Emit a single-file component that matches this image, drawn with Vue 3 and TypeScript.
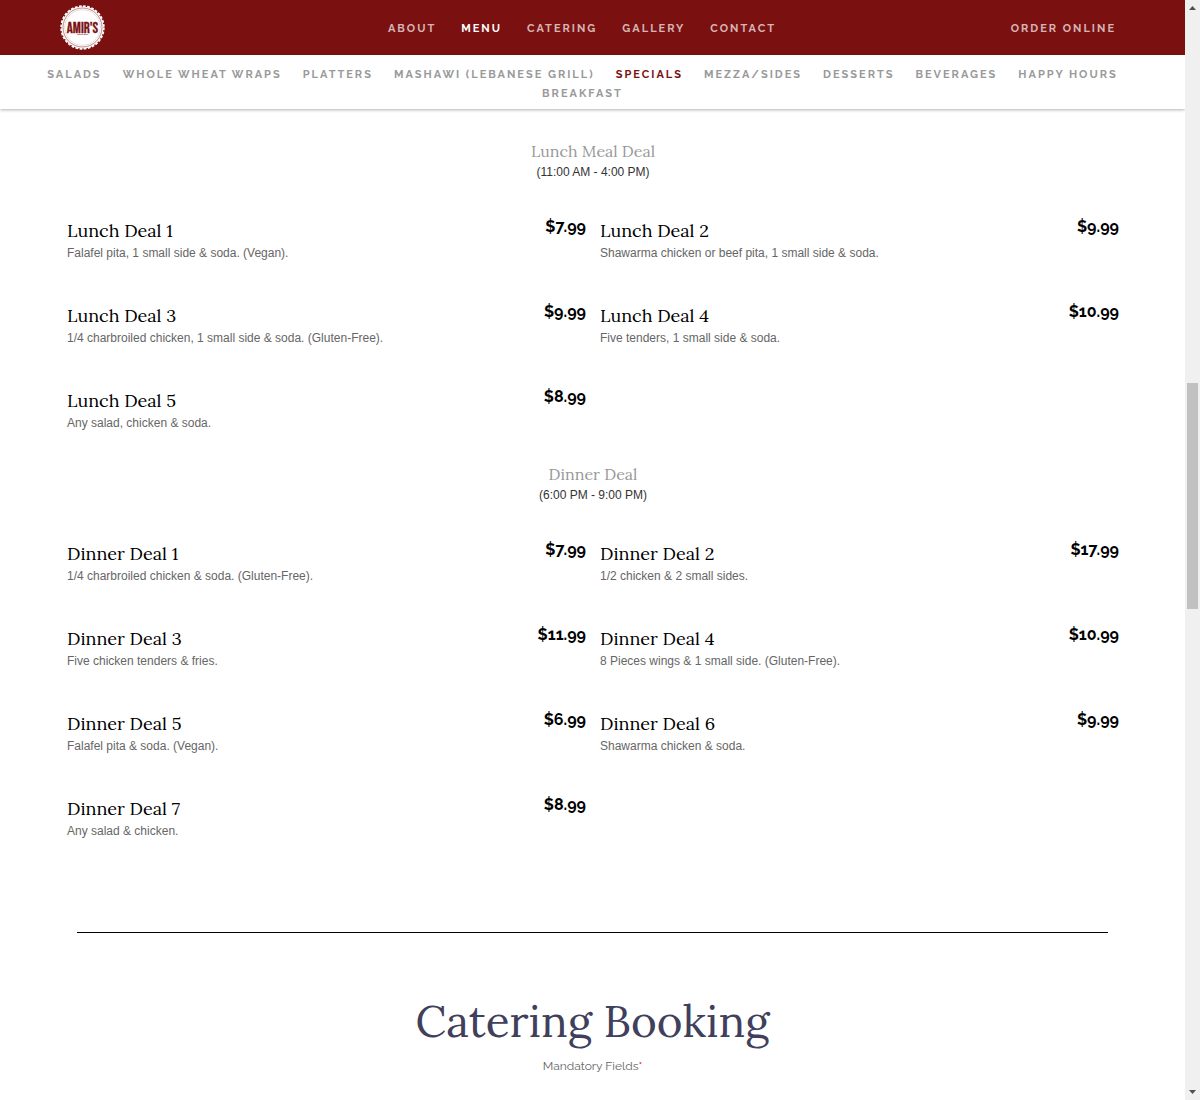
<script setup lang="ts">
interface Deal {
  name: string
  description: string
  price: string
}

interface DealGroup {
  title: string
  hours: string
  deals: Deal[]
}

const mainLinks: string[] = ['About', 'Menu', 'Catering', 'Gallery', 'Contact']
const menuLinks: string[] = [
  'Salads',
  'Whole Wheat Wraps',
  'Platters',
  'Mashawi (Lebanese Grill)',
  'Specials',
  'Mezza/Sides',
  'Desserts',
  'Beverages',
  'Happy Hours',
  'Breakfast',
]

const groups: DealGroup[] = [
  {
    title: 'Lunch Meal Deal',
    hours: '(11:00 AM - 4:00 PM)',
    deals: [
      { name: 'Lunch Deal 1', description: 'Falafel pita, 1 small side & soda. (Vegan).', price: '$7.99' },
      { name: 'Lunch Deal 2', description: 'Shawarma chicken or beef pita, 1 small side & soda.', price: '$9.99' },
      { name: 'Lunch Deal 3', description: '1/4 charbroiled chicken, 1 small side & soda. (Gluten-Free).', price: '$9.99' },
      { name: 'Lunch Deal 4', description: 'Five tenders, 1 small side & soda.', price: '$10.99' },
      { name: 'Lunch Deal 5', description: 'Any salad, chicken & soda.', price: '$8.99' },
    ],
  },
  {
    title: 'Dinner Deal',
    hours: '(6:00 PM - 9:00 PM)',
    deals: [
      { name: 'Dinner Deal 1', description: '1/4 charbroiled chicken & soda. (Gluten-Free).', price: '$7.99' },
      { name: 'Dinner Deal 2', description: '1/2 chicken & 2 small sides.', price: '$17.99' },
      { name: 'Dinner Deal 3', description: 'Five chicken tenders & fries.', price: '$11.99' },
      { name: 'Dinner Deal 4', description: '8 Pieces wings & 1 small side. (Gluten-Free).', price: '$10.99' },
      { name: 'Dinner Deal 5', description: 'Falafel pita & soda. (Vegan).', price: '$6.99' },
      { name: 'Dinner Deal 6', description: 'Shawarma chicken & soda.', price: '$9.99' },
      { name: 'Dinner Deal 7', description: 'Any salad & chicken.', price: '$8.99' },
    ],
  },
]
</script>

<template>
  <div class="window">
    <div class="page">
      <header class="site-header">
        <div class="top-bar">
          <a href="#home" class="brand" aria-label="Amir's home">
            <svg class="logo" viewBox="0 0 47 47" aria-hidden="true">
              <circle cx="23.5" cy="23.5" r="21" fill="#fff" />
              <circle cx="23.5" cy="23.5" r="21.3" fill="none" stroke="#fff" stroke-width="1.8" stroke-dasharray="2.7 1.48" />
              <circle cx="23.5" cy="23.5" r="19.5" fill="none" stroke="#7b1010" stroke-width="0.7" opacity="0.7" />
              <circle cx="23.5" cy="23.5" r="17.8" fill="none" stroke="#7b1010" stroke-width="0.5" opacity="0.3" />
              <text x="23.5" y="29" text-anchor="middle" class="logo-name">AMIR'S</text>
              <text x="23.5" y="31" text-anchor="middle" class="logo-sub">SINCE 2011</text>
            </svg>
          </a>
          <nav class="main-nav" aria-label="Main">
            <a v-for="link in mainLinks" :key="link" href="#" :class="{ active: link === 'Menu' }">{{ link }}</a>
          </nav>
          <a href="#order" class="order">Order Online</a>
        </div>
        <nav class="menu-nav" aria-label="Menu sections">
          <a v-for="link in menuLinks" :key="link" href="#" :class="{ active: link === 'Specials' }">{{ link }}</a>
        </nav>
      </header>

      <main>
        <section v-for="group in groups" :key="group.title" class="group">
          <h2>{{ group.title }}</h2>
          <p class="hours">{{ group.hours }}</p>
          <ul class="deals">
            <li v-for="deal in group.deals" :key="deal.name" class="deal">
              <div>
                <h3>{{ deal.name }}</h3>
                <p class="description">{{ deal.description }}</p>
              </div>
              <span class="price">{{ deal.price }}</span>
            </li>
          </ul>
        </section>

        <hr />

        <section class="booking">
          <h1>Catering Booking</h1>
          <p class="mandatory">Mandatory Fields<span class="star">*</span></p>
        </section>
      </main>
    </div>

    <div class="scrollbar" aria-hidden="true">
      <svg class="arrow" viewBox="0 0 15 17"><path d="M4 10h7L7.500 6z" fill="#505050" /></svg>
      <div class="track"><div class="thumb"></div></div>
      <svg class="arrow" viewBox="0 0 15 17"><path d="M4 7h7L7.500 11z" fill="#505050" /></svg>
    </div>
  </div>
</template>

<style>
body {
  margin: 0;
  background: #fff;
}
</style>

<style scoped>
.window {
  display: flex;
  align-items: flex-start;
  font-family: 'Liberation Sans', Arial, sans-serif;
  font-size: 12px;
}

.page {
  flex: 1;
  min-width: 0;
}

a {
  text-decoration: none;
}

h1,
h2,
h3,
p,
ul {
  margin: 0;
  padding: 0;
  font-weight: 400;
}

h1,
h2,
h3 {
  font-family: Lora, 'Liberation Serif', serif;
}

.site-header {
  box-shadow: 0 1px 3px rgba(0, 0, 0, 0.3);
}

.site-header a {
  font: 700 11px/19px Raleway, Lato, sans-serif;
  letter-spacing: 2px;
  text-transform: uppercase;
}

.top-bar {
  display: grid;
  grid-template-columns: 1fr auto 1fr;
  align-items: center;
  height: 55px;
  padding: 0 69px 0 59px;
  background: #7b1010;
}

.brand,
.logo {
  display: block;
  width: 47px;
  height: 47px;
}

.logo-name {
  font: 400 15px 'Bebas Neue', 'Oswald', 'Roboto Condensed', 'Liberation Sans', sans-serif;
  letter-spacing: 0;
  fill: #7b1010;
  stroke: #7b1010;
  stroke-width: 0.3px;
}

.logo-sub {
  font: 700 2px 'Liberation Sans', sans-serif;
  letter-spacing: 0;
  fill: #7b1010;
}

.main-nav {
  display: flex;
  gap: 25px;
  margin-right: 11px;
}

.main-nav a,
.order {
  padding-top: 1px;
  color: rgba(255, 255, 255, 0.7);
}

.main-nav a.active {
  color: #fff;
}

.order {
  justify-self: end;
}

.menu-nav {
  display: flex;
  flex-wrap: wrap;
  justify-content: center;
  column-gap: 21px;
  padding: 10px 40px 6px 20px;
}

.menu-nav a {
  color: #999;
}

.menu-nav a.active {
  color: #7b1010;
}

.group {
  padding: 0 66px 0 67px;
  text-align: center;
}

.group:first-child {
  padding-top: 32px;
}

h2 {
  font-size: 16px;
  line-height: 21px;
  color: #999;
}

.hours {
  line-height: 20px;
  color: #333;
}

.deals {
  display: grid;
  grid-template-columns: 1fr 1fr;
  column-gap: 14px;
  padding-top: 35px;
  list-style: none;
}

.deal {
  display: flex;
  justify-content: space-between;
  align-items: flex-start;
  height: 85px;
  text-align: left;
}

.group + .group {
  margin-top: -8px;
}

h3 {
  padding-top: 3px;
  font-size: 18px;
  line-height: 22px;
  color: #000;
}

.description {
  padding-top: 1px;
  line-height: 20px;
  color: #666;
}

.price {
  font: 700 16px/20px Raleway, Lato, sans-serif;
  color: #000;
}

hr {
  height: 1px;
  margin: 52px 77px 0;
  border: 0;
  background: #000;
}

.booking {
  padding: 59px 0 24px;
  text-align: center;
}

h1 {
  padding-bottom: 6px;
  font-size: 44px;
  line-height: 58px;
  color: #40405c;
}

.mandatory {
  font: 400 12px/20px Raleway, Lato, sans-serif;
  color: #666;
}

.star {
  color: #f00;
}

.scrollbar {
  position: sticky;
  top: 0;
  display: flex;
  flex-direction: column;
  width: 15px;
  height: 100vh;
  background: #f0f0f0;
}

.arrow {
  flex: none;
  width: 15px;
  height: 17px;
}

.track {
  flex: 1;
}

.thumb {
  position: relative;
  top: 34.3%;
  height: 21.200%;
  margin: 0 2px;
  background: #c1c1c1;
}
</style>
